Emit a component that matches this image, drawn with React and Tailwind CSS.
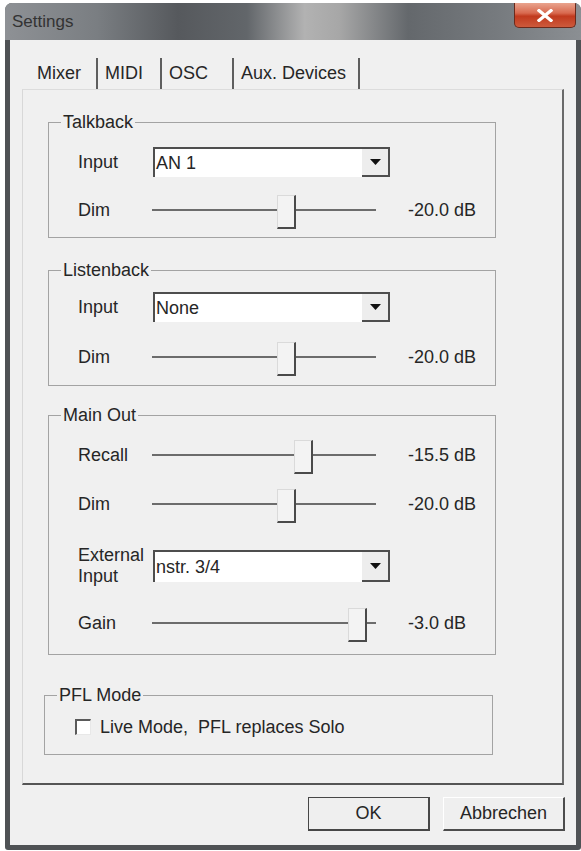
import React from "react";

const FONT = "font-['Liberation_Sans',Arial,sans-serif]";

function Combo({ value, height = 30 }) {
  return (
    <div className="flex w-[237px] border-l-2 border-t-2 border-[#4e4e4e] bg-white" style={{ height }}>
      <div className="flex flex-1 items-center pl-[1px] leading-none">{value}</div>
      <div className="flex w-[28px] items-center justify-center border-b-2 border-r-2 border-[#4e4e4e] bg-[#ededed]">
        <svg width="11" height="6" viewBox="0 0 11 6">
          <path d="M0 0h11L5.5 6z" fill="#111" />
        </svg>
      </div>
    </div>
  );
}

function Slider({ pos }) {
  return (
    <div className="relative h-[34px] w-[224px]">
      <div className="absolute left-0 right-0 top-[14px] h-[2px] bg-[#6c6c6c]" />
      <div
        className="absolute top-0 h-[34px] w-[19px] border-b-2 border-l border-r-2 border-t border-b-[#4a4a4a] border-l-[#dadada] border-r-[#4a4a4a] border-t-[#dadada] bg-[#f3f3f3]"
        style={{ left: pos }}
      />
    </div>
  );
}

function SliderRow({ label, pos, value }) {
  return (
    <div className="flex items-start">
      <div className="w-[74px] leading-[30px]">{label}</div>
      <Slider pos={pos} />
      <div className="ml-[32px] leading-[30px]">{value}</div>
    </div>
  );
}

function ComboRow({ label, value, height }) {
  return (
    <div className="flex items-center">
      <div className="w-[75px] leading-[21px]">{label}</div>
      <Combo value={value} height={height} />
    </div>
  );
}

function Group({ title, className = "", children }) {
  return (
    <fieldset className={`w-[448px] border border-[#a3a3a3] ${className}`}>
      <legend className="ml-[12px] px-[2px] leading-[20px]">{title}</legend>
      {children}
    </fieldset>
  );
}

function Tab({ width, first, children }) {
  return (
    <div
      className={`flex h-[31px] items-center border-r-2 border-r-[#5e5e5e] ${first ? "pl-[15px]" : "pl-[7px]"}`}
      style={{ width }}
    >
      {children}
    </div>
  );
}

function Button({ children, primary }) {
  return (
    <div
      className={`flex h-[34px] w-[122px] items-center justify-center bg-[#efefef] ${
        primary
          ? "border border-b-2 border-r-2 border-[#474747]"
          : "border-b-2 border-l border-r-2 border-t border-b-[#4c4c4c] border-l-white border-r-[#4c4c4c] border-t-white"
      }`}
    >
      {children}
    </div>
  );
}

export default function App() {
  return (
    <div className={`h-[851px] w-[581px] overflow-hidden bg-white text-[18px] text-[#262626] ${FONT}`}>
      <div className="ml-[5px] mt-[3px] flex h-[847px] w-[576px] flex-col overflow-hidden rounded-b-[3px] rounded-t-[7px] bg-[#4f5255]">
        {/* title bar */}
        <div className="flex h-[37px] shrink-0 items-start justify-between bg-[linear-gradient(90deg,#8e9195_0%,#7a7e82_16%,#56595d_30%,#62666a_42%,#b2b2b2_52%,#a7a7a7_58%,#64686c_70%,#777b7f_86%,#8b8f93_100%)]">
          <div className="pl-[7px] pt-[9px] text-[17px] leading-[20px] text-[#333]">Settings</div>
          <div className="mr-[5px] flex h-[25px] w-[62px] items-center justify-center rounded-b-[5px] border border-t-0 border-[#6b2a1c] bg-[linear-gradient(180deg,#e9a48e_0%,#d8694f_42%,#c13a1e_55%,#cd5a3c_100%)]">
            <svg width="16" height="13" viewBox="0 0 16 13">
              <path d="M2 1.5l12 10M14 1.5l-12 10" stroke="#fff" strokeWidth="3.2" strokeLinecap="square" />
            </svg>
          </div>
        </div>

        {/* client area */}
        <div className="mx-[5px] mb-[5px] flex flex-1 flex-col bg-[#f0f0f0]">
          <div className="ml-[12px] mt-[18px] flex">
            <Tab width={76} first>Mixer</Tab>
            <Tab width={64}>MIDI</Tab>
            <Tab width={72}>OSC</Tab>
            <Tab width={126}>Aux. Devices</Tab>
          </div>

          <div className="ml-[12px] flex h-[696px] w-[542px] flex-col border-b-2 border-l border-r-2 border-t border-b-[#555] border-l-[#d8d8d8] border-r-[#6a6a6a] border-t-[#dcdcdc] pl-[25px]">
            <Group title="Talkback" className="mt-[22px]">
              <div className="flex flex-col gap-[18px] pb-[8px] pl-[29px] pt-[15px]">
                <ComboRow label="Input" value="AN 1" />
                <SliderRow label="Dim" pos={125} value="-20.0 dB" />
              </div>
            </Group>

            <Group title="Listenback" className="mt-[22px]">
              <div className="flex flex-col gap-[20px] pb-[9px] pl-[29px] pt-[12px]">
                <ComboRow label="Input" value="None" />
                <SliderRow label="Dim" pos={125} value="-20.0 dB" />
              </div>
            </Group>

            <Group title="Main Out" className="mt-[19px]">
              <div className="flex flex-col pb-[12px] pl-[29px] pt-[15px]">
                <SliderRow label="Recall" pos={142} value="-15.5 dB" />
                <div className="mt-[15px]">
                  <SliderRow label="Dim" pos={125} value="-20.0 dB" />
                </div>
                <div className="mt-[22px]">
                  <ComboRow
                    height={32}
                    label={
                      <>
                        External
                        <br />
                        Input
                      </>
                    }
                    value="nstr. 3/4"
                  />
                </div>
                <div className="mt-[21px]">
                  <SliderRow label="Gain" pos={196} value="-3.0 dB" />
                </div>
              </div>
            </Group>

            <Group title="PFL Mode" className="-ml-[4px] mt-[30px] w-[449px]">
              <div className="flex items-center gap-[9px] pb-[17px] pl-[30px] pt-[12px]">
                <div className="h-[16px] w-[16px] border-b border-l-2 border-r border-t-2 border-b-[#e8e8e8] border-l-[#5a5a5a] border-r-[#e8e8e8] border-t-[#5a5a5a] bg-white" />
                <div className="whitespace-pre leading-[20px]">{"Live Mode,  PFL replaces Solo"}</div>
              </div>
            </Group>
          </div>

          <div className="mr-[11px] mt-[12px] flex justify-end gap-[13px]">
            <Button primary>OK</Button>
            <Button>Abbrechen</Button>
          </div>
        </div>
      </div>
    </div>
  );
}
